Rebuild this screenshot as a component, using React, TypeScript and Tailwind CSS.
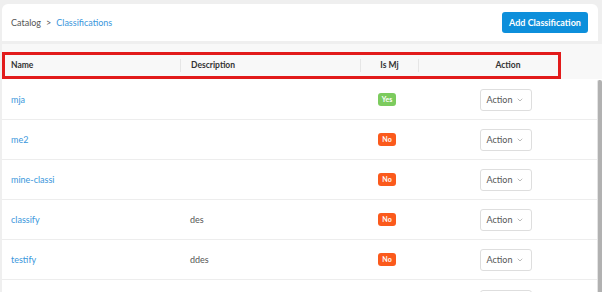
import { ChevronDown } from 'lucide-react';

const ROWS = [
  { name: 'mja', description: '', isMj: true },
  { name: 'me2', description: '', isMj: false },
  { name: 'mine-classi', description: '', isMj: false },
  { name: 'classify', description: 'des', isMj: false },
  { name: 'testify', description: 'ddes', isMj: false },
];

const COLS = 'grid grid-cols-[178px_180px_58px_1fr]';

export default function App() {
  return (
    <div
      className="relative w-[602px] h-[292px] overflow-hidden bg-[#efefef] pt-[4px] pl-[2px]"
      style={{ fontFamily: 'Lato, "Open Sans", sans-serif' }}
    >
      {/* page header */}
      <div className="mr-[4px] h-[37px] rounded-t-[6px] bg-white flex items-center justify-between pl-[9px] pr-[10px]">
        <div className="flex items-center gap-[5px] text-[9px]">
          <span className="text-[#555]">Catalog</span>
          <span className="text-[#555]">&gt;</span>
          <span className="text-[#3a97dc]">Classifications</span>
        </div>
        <button className="h-[21px] w-[86px] rounded-[3px] bg-[#0d8fdb] text-white text-[9px] font-bold">
          Add Classification
        </button>
      </div>

      {/* table */}
      <div className="mt-[3px] bg-[#f8f8f8] pt-[8px]">
        <div className={`${COLS} h-[27px] items-center pr-[5px] text-[8.5px] font-bold text-[#333]`}>
          <div className="pl-[9px]">Name</div>
          <div className="pl-[10px] border-l border-[#e6e6e6] h-[13px] flex items-center">Description</div>
          <div className="border-l border-[#e6e6e6] h-[13px] flex items-center justify-center">Is Mj</div>
          <div className="border-l border-[#e6e6e6] h-[13px] flex items-center justify-center">Action</div>
        </div>

        <div className="flex bg-white pt-[1px]">
          <div className="flex-1">
            {ROWS.map((row, i) => (
              <div key={i} className={`${COLS} h-[40px] items-center border-b border-[#ededed] text-[9px]`}>
                <div className="pl-[9px] text-[#3a97dc]">{row.name}</div>
                <div className="pl-[10px] text-[#555]">{row.description}</div>
                <div className="flex justify-center pr-[4px]">
                  {row.isMj ? (
                    <span className="h-[13px] px-[4px] rounded-[3px] bg-[#7ccb5e] text-white text-[7px] font-bold flex items-center">Yes</span>
                  ) : (
                    <span className="h-[13px] px-[4px] rounded-[3px] bg-[#fb5a1c] text-white text-[7px] font-bold flex items-center">No</span>
                  )}
                </div>
                <div className="flex justify-center pr-[4px]">
                  <button className="h-[22px] w-[52px] rounded-[3px] border border-[#dedede] bg-white flex items-center justify-center gap-[4px] text-[9px] text-[#555]">
                    Action
                    <ChevronDown size={8} strokeWidth={1.5} className="text-[#777] mt-[1px]" />
                  </button>
                </div>
              </div>
            ))}
            {/* next row, only its button's top edge shows in view */}
            <div className={`${COLS} h-[40px] pt-[10px]`}>
              <div />
              <div />
              <div />
              <div className="flex justify-center pr-[4px]">
                <div className="h-[22px] w-[52px] rounded-[3px] border border-[#dedede] bg-white" />
              </div>
            </div>
          </div>
          <div className="w-[5px] border-l border-[#e4e4e4] bg-[#b1b1b1] rounded-t-[2px]" />
        </div>
      </div>

      {/* annotation highlight */}
      <div className="absolute left-[2px] top-[52px] w-[559px] h-[27px] border-[3px] border-[#e21b1b]" />
    </div>
  );
}
